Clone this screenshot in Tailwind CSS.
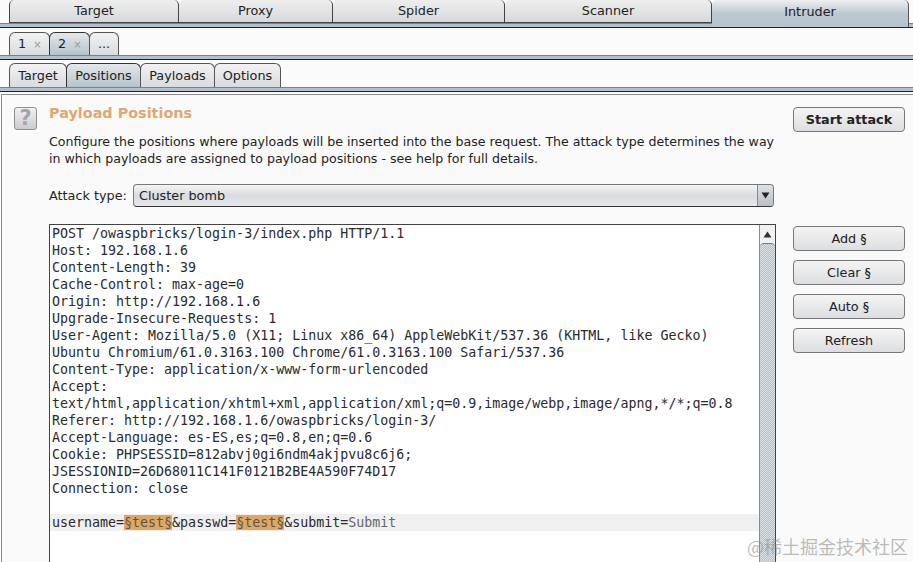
<!DOCTYPE html>
<html lang="en">
<head>
    <meta charset="UTF-8">
    <title>Intruder - Positions</title>
    <script src="https://cdn.jsdelivr.net/npm/@tailwindcss/browser@4"></script>
</head>
<body class="bg-[#fbfbfb] overflow-hidden">
    <div class="relative w-[913px] h-[562px] overflow-hidden font-['DejaVu_Sans',sans-serif] text-[12.8px] text-[#222]">
        <!-- Main tabs -->
        <div class="flex pl-[9px] h-[23px] items-start text-center">
            <div class="w-[170px] h-[23px] flex items-center justify-center rounded-t-[5px] border-x border-b border-[#444] bg-linear-to-b from-[#eeeeee] to-[#d6d9dc]">Target</div>
            <div class="w-[154px] h-[23px] flex items-center justify-center rounded-t-[5px] border-r border-b border-[#444] bg-linear-to-b from-[#eeeeee] to-[#d6d9dc]">Proxy</div>
            <div class="w-[172px] h-[23px] flex items-center justify-center rounded-t-[5px] border-r border-b border-[#444] bg-linear-to-b from-[#eeeeee] to-[#d6d9dc]">Spider</div>
            <div class="w-[207px] h-[23px] flex items-center justify-center rounded-t-[5px] border-r border-b border-[#444] bg-linear-to-b from-[#eeeeee] to-[#d6d9dc]">Scanner</div>
            <div class="relative z-10 w-[197px] h-[27px] pb-[4px] flex items-center justify-center rounded-t-[5px] border-r border-[#555] bg-linear-to-b from-[#eef0f2] via-[#bcc8d0] to-[#b9c5ce]">Intruder</div>
        </div>
        <div class="h-[5px] bg-[#b3c0c9] border-t border-t-[#75828b] border-b border-b-[#16222b]"></div>

        <!-- Request tabs -->
        <div class="flex pl-[9px] h-[27px] pt-[4px]">
            <div class="w-[41px] flex items-center pl-[8px] gap-[7px] rounded-t-[6px] border border-b-0 border-[#555] bg-linear-to-b from-[#f2f2f2] to-[#d8dce0]">1<span class="text-[10px] text-[#999]">×</span></div>
            <div class="w-[41px] -ml-px flex items-center pl-[8px] gap-[7px] rounded-t-[6px] border border-b-0 border-[#333] bg-linear-to-b from-[#e4e8eb] to-[#b6c3cc]">2<span class="text-[10px] text-[#999]">×</span></div>
            <div class="w-[30px] -ml-px flex items-center justify-center rounded-t-[6px] border border-b-0 border-[#555] bg-linear-to-b from-[#f2f2f2] to-[#d8dce0]">...</div>
        </div>
        <div class="h-[5px] bg-[#b3c0c9] border-t border-t-[#75828b] border-b border-b-[#16222b]"></div>

        <!-- Sub tabs -->
        <div class="flex pl-[9px] h-[27px] pt-[3px]">
            <div class="w-[58px] flex items-center justify-center rounded-t-[6px] border border-b-0 border-[#555] bg-linear-to-b from-[#f2f2f2] to-[#d8dce0]">Target</div>
            <div class="w-[75px] -ml-px flex items-center justify-center rounded-t-[6px] border border-b-0 border-[#333] bg-linear-to-b from-[#e4e8eb] to-[#b6c3cc]">Positions</div>
            <div class="w-[75px] -ml-px flex items-center justify-center rounded-t-[6px] border border-b-0 border-[#555] bg-linear-to-b from-[#f2f2f2] to-[#d8dce0]">Payloads</div>
            <div class="w-[67px] -ml-px flex items-center justify-center rounded-t-[6px] border border-b-0 border-[#555] bg-linear-to-b from-[#f2f2f2] to-[#d8dce0]">Options</div>
        </div>
        <div class="h-[5px] bg-[#b3c0c9] border-t border-t-[#75828b] border-b border-b-[#16222b]"></div>

        <!-- Panel -->
        <div class="mt-[2px] ml-px h-[470px] border-t border-l border-[#8c8c8c] bg-[#fafafa] flex pl-[12px] pt-[12px]">
            <div class="w-[23px] h-[23px] shrink-0 flex items-center justify-center rounded-[3px] border border-[#8f8f8f] bg-linear-to-b from-[#f2f2f2] to-[#c9ccd0] text-[21px] font-bold text-[#a2a5ab]">?</div>

            <div class="ml-[12px] w-[727px] shrink-0">
                <h2 class="h-[15px] leading-[13px] text-[14.4px] font-bold text-[#e0a86e]">Payload Positions</h2>
                <p class="mt-[11px] leading-[17px] text-[12.6px] whitespace-pre">Configure the positions where payloads will be inserted into the base request. The attack type determines the way
in which payloads are assigned to payload positions - see help for full details.</p>

                <div class="mt-[17px] flex items-center h-[23px]">
                    <span class="w-[84px] shrink-0">Attack type:</span>
                    <div class="w-[641px] h-[23px] pl-[5px] flex items-center justify-between rounded-[4px] border border-[#777] border-b-[#333] bg-linear-to-b from-[#f4f4f4] via-[#d9dce0] to-[#e6e8ea]">
                        <span>Cluster bomb</span>
                        <div class="w-[16px] h-full flex items-center justify-center border-l border-[#888] rounded-r-[4px] bg-linear-to-b from-[#dfe2e5] to-[#b6c0c8]">
                            <svg width="9" height="7" viewBox="0 0 9 7"><path d="M0.5 0.5h8L4.5 6.5z" fill="#222"/></svg>
                        </div>
                    </div>
                </div>

                <!-- Request editor -->
                <div class="mt-[17px] w-[727px] h-[340px] flex border border-[#444] bg-white">
                    <pre class="flex-1 font-['DejaVu_Sans_Mono',monospace] text-[13.3px] leading-[17px] text-[#2a2a2a]"><div class="pl-[2px]">POST /owaspbricks/login-3/index.php HTTP/1.1
Host: 192.168.1.6
Content-Length: 39
Cache-Control: max-age=0
Origin: http://192.168.1.6
Upgrade-Insecure-Requests: 1
User-Agent: Mozilla/5.0 (X11; Linux x86_64) AppleWebKit/537.36 (KHTML, like Gecko)
Ubuntu Chromium/61.0.3163.100 Chrome/61.0.3163.100 Safari/537.36
Content-Type: application/x-www-form-urlencoded
Accept:
text/html,application/xhtml+xml,application/xml;q=0.9,image/webp,image/apng,*/*;q=0.8
Referer: http://192.168.1.6/owaspbricks/login-3/
Accept-Language: es-ES,es;q=0.8,en;q=0.6
Cookie: PHPSESSID=812abvj0gi6ndm4akjpvu8c6j6;
JSESSIONID=26D68011C141F0121B2BE4A590F74D17
Connection: close

</div><div class="pl-[2px] bg-[#f0f0f0]">username=<span class="bg-[#e2a65f] text-[#555]">§test§</span>&amp;passwd=<span class="bg-[#e2a65f] text-[#555]">§test§</span>&amp;submit=<span class="text-[#666]">Submit</span></div></pre>
                    <div class="w-[16px] shrink-0 flex flex-col border-l border-[#8a8a8a]">
                        <div class="h-[18px] flex items-center justify-center bg-[#f0f1f2]">
                            <svg width="9" height="7" viewBox="0 0 9 7"><path d="M0.5 6.5h8L4.5 0.5z" fill="#333"/></svg>
                        </div>
                        <div class="flex-1 rounded-t-[4px] border-t border-[#777] bg-[repeating-conic-gradient(#b3c0c9_0_25%,#dbe2e7_0_50%)] bg-size-[2px_2px]"></div>
                    </div>
                </div>
            </div>

            <!-- Action buttons -->
            <div class="ml-[17px] w-[112px] shrink-0 flex flex-col">
                <button class="h-[25px] rounded-[4px] border border-[#777] bg-linear-to-b from-[#f4f4f4] to-[#dcdee1] font-bold">Start attack</button>
                <button class="mt-[94px] h-[25px] rounded-[4px] border border-[#777] bg-linear-to-b from-[#f4f4f4] to-[#dcdee1]">Add §</button>
                <button class="mt-[9px] h-[25px] rounded-[4px] border border-[#777] bg-linear-to-b from-[#f4f4f4] to-[#dcdee1]">Clear §</button>
                <button class="mt-[9px] h-[25px] rounded-[4px] border border-[#777] bg-linear-to-b from-[#f4f4f4] to-[#dcdee1]">Auto §</button>
                <button class="mt-[9px] h-[25px] rounded-[4px] border border-[#777] bg-linear-to-b from-[#f4f4f4] to-[#dcdee1]">Refresh</button>
            </div>
        </div>

        <!-- Watermark -->
        <div class="absolute left-[747px] top-[534px] font-['Noto_Sans_CJK_SC',sans-serif] text-[18px] leading-[24px] text-[#8f8f8f]/60 whitespace-nowrap">@稀土掘金技术社区</div>
    </div>
</body>
</html>
